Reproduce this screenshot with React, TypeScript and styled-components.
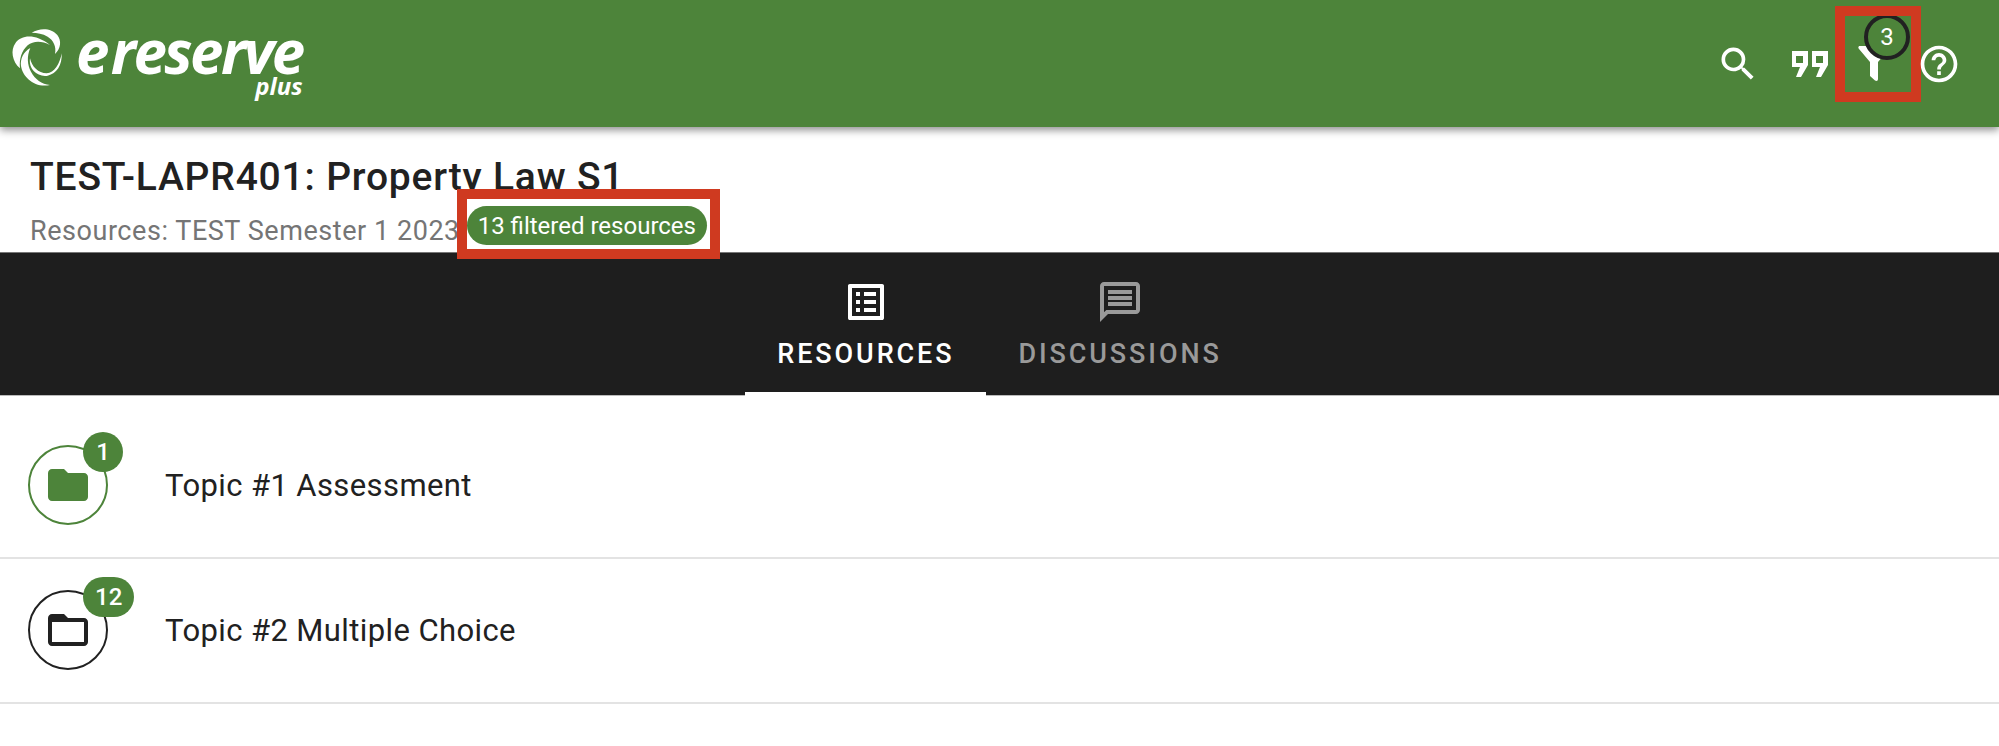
import React from "react";
import styled, { createGlobalStyle } from "styled-components";
import { MdSearch, MdHelpOutline, MdOutlineListAlt, MdOutlineMessage, MdFolder, MdFolderOpen } from "react-icons/md";

const GREEN = "#4d843a";
const RED = "#cf3a20";
const INK = "#212121";

const Global = createGlobalStyle`
  html, body { margin: 0; padding: 0; background: #fff; overflow: hidden; }
  body { font-family: Roboto, "Liberation Sans", sans-serif; color: ${INK}; }
`;

const Page = styled.div`
  width: 1999px;
  height: 746px;
  overflow: hidden;
  display: flex;
  flex-direction: column;
`;

const Header = styled.header`
  height: 127px;
  flex: none;
  background: ${GREEN};
  box-shadow: 0 3px 8px rgba(0, 0, 0, 0.45);
  display: flex;
  align-items: flex-start;
  justify-content: space-between;
  padding: 0 38px 0 5px;
  box-sizing: border-box;
  position: relative;
  z-index: 2;
`;

const Logo = styled.div`
  display: flex;
  align-items: flex-start;
  gap: 1px;
  padding-top: 20px;
  color: #fff;
`;

const LogoWords = styled.div`
  display: flex;
  flex-direction: column;
  align-items: flex-end;
  font-family: "Open Sans", sans-serif;
  font-style: italic;
  color: #fff;
  padding-top: 6px;
`;

const LogoName = styled.span`
  font-size: 60px;
  line-height: 50px;
  font-weight: 700;
  letter-spacing: -2.6px;
`;

const LogoE = styled.span`
  margin-right: 4px;
`;

const LogoPlus = styled.span`
  font-size: 24px;
  line-height: 20px;
  font-weight: 700;
`;

const Actions = styled.div`
  display: flex;
  align-items: center;
  height: 127px;
  color: #fff;
  position: relative;
`;

const ActionIcon = styled.span<{ $w: number; $ml?: number }>`
  width: ${(p) => p.$w}px;
  margin-left: ${(p) => p.$ml ?? 0}px;
  display: flex;
  justify-content: center;
  align-items: center;
  position: relative;
`;

const FilterBadge = styled.span`
  position: absolute;
  left: 6px;
  top: -32px;
  width: 46px;
  height: 46px;
  box-sizing: border-box;
  border: 4px solid ${INK};
  border-radius: 50%;
  background: ${GREEN};
  color: #fff;
  font-size: 24px;
  display: flex;
  align-items: center;
  justify-content: center;
`;

const Highlight = styled.span`
  position: absolute;
  box-sizing: border-box;
  border: 10px solid ${RED};
  pointer-events: none;
`;

const TopHighlight = styled(Highlight)`
  left: -23px;
  top: -40px;
  width: 86px;
  height: 96px;
`;

const CourseInfo = styled.section`
  height: 125px;
  flex: none;
  box-sizing: border-box;
  padding: 26px 30px 0;
`;

const Title = styled.h1`
  margin: 0;
  font-size: 39px;
  line-height: 48px;
  font-weight: 500;
  letter-spacing: 0.8px;
  color: ${INK};
`;

const SubRow = styled.div`
  display: flex;
  align-items: flex-start;
  margin-top: 5px;
`;

const Sub = styled.span`
  font-size: 27px;
  line-height: 40px;
  color: #757575;
  letter-spacing: 0.55px;
  margin-top: 5px;
`;

const ChipWrap = styled.span`
  position: relative;
  margin-left: 7px;
  display: inline-flex;
`;

const Chip = styled.span`
  height: 39px;
  width: 240px;
  box-sizing: border-box;
  border-radius: 20px;
  background: ${GREEN};
  color: #fff;
  font-size: 24px;
  display: flex;
  align-items: center;
  justify-content: center;
  position: relative;
  z-index: 1;
`;

const ChipHighlight = styled(Highlight)`
  left: -10px;
  top: -17px;
  width: 263px;
  height: 70px;
  background: #fff;
`;

const TabBar = styled.nav`
  height: 144px;
  flex: none;
  background: #1e1e1e;
  border-top: 1px solid #777;
  border-bottom: 1px solid #bbb;
  box-sizing: border-box;
  display: flex;
  justify-content: center;
`;

const Tab = styled.div<{ $active?: boolean }>`
  padding: 25px 32px 0;
  box-sizing: border-box;
  display: flex;
  flex-direction: column;
  align-items: center;
  color: ${(p) => (p.$active ? "#fff" : "#9a9a9a")};
  border-bottom: 4px solid ${(p) => (p.$active ? "#fff" : "transparent")};
  margin-bottom: -1px;
`;

const TabIcon = styled.span`
  display: flex;
  height: 48px;
`;

const TabLabel = styled.span`
  font-size: 27px;
  line-height: 30px;
  font-weight: 500;
  letter-spacing: 2.9px;
  margin-top: 13px;
`;

const List = styled.div`
  padding-top: 18px;
`;

const Row = styled.div`
  height: 145px;
  box-sizing: border-box;
  border-bottom: 2px solid #e3e3e3;
  display: flex;
  align-items: center;
  padding-left: 28px;
`;

const Avatar = styled.div<{ $color: string }>`
  width: 80px;
  height: 80px;
  box-sizing: border-box;
  border: 2px solid ${(p) => p.$color};
  border-radius: 50%;
  color: ${(p) => p.$color};
  display: flex;
  align-items: center;
  justify-content: center;
  position: relative;
  flex: none;
  margin-top: -1px;
`;

const CountBadge = styled.span`
  position: absolute;
  left: 53px;
  top: -15px;
  min-width: 40px;
  height: 40px;
  box-sizing: border-box;
  padding: 0 12px;
  border-radius: 20px;
  background: ${GREEN};
  color: #fff;
  font-size: 24px;
  font-weight: 500;
  display: flex;
  align-items: center;
  justify-content: center;
`;

const RowText = styled.span`
  margin-left: 57px;
  font-size: 31px;
  color: ${INK};
  letter-spacing: 0.4px;
`;

const Swirl = () => (
  <svg width="70" height="75" viewBox="0 0 210 225" fill="currentColor">
    <path d="M80 38C105 22 140 24 157 45C170 62 168 85 150 102C155 80 145 60 128 50C113 41 97 38 80 38Z" />
    <path d="M45 145C22 125 15 90 32 68C50 45 90 40 135 75C110 62 85 62 68 76C50 92 42 118 45 145Z" />
    <path d="M76 84C55 95 45 118 48 138C53 172 90 205 135 195C110 192 90 178 78 155C67 135 65 108 76 84Z" />
    <path d="M75 115C80 140 100 160 125 160C148 160 165 130 170 100C172 135 155 162 128 167C100 172 70 150 75 115Z" />
  </svg>
);

const Funnel = () => (
  <svg width="32" height="35" viewBox="0 0 32 35" fill="currentColor">
    <path d="M2 0H30C32 0 32 2 31 3L20 16V33C20 35 18.500 35.500 17 34.500L12 30V16L1 3C0 2 0 0 2 0Z" />
  </svg>
);

const Quotes = () => (
  <svg width="38" height="26" viewBox="0 0 38 26" fill="currentColor">
    <path
      fillRule="evenodd"
      d="M1 0H17V14L10 26H5L9 16H1ZM5 5V12H12V5ZM21 0H37V14L30 26H25L29 16H21ZM25 5V12H32V5Z"
    />
  </svg>
);

export default function App() {
  return (
    <Page>
      <Global />
      <Header>
        <Logo>
          <Swirl />
          <LogoWords>
            <LogoName><LogoE>e</LogoE>reserve</LogoName>
            <LogoPlus>plus</LogoPlus>
          </LogoWords>
        </Logo>
        <Actions>
          <ActionIcon $w={44}><MdSearch size={48} /></ActionIcon>
          <ActionIcon $w={38} $ml={31}><Quotes /></ActionIcon>
          <ActionIcon $w={32} $ml={29}>
            <Funnel />
            <FilterBadge>3</FilterBadge>
            <TopHighlight />
          </ActionIcon>
          <ActionIcon $w={44} $ml={27}><MdHelpOutline size={44} /></ActionIcon>
        </Actions>
      </Header>
      <CourseInfo>
        <Title>TEST-LAPR401: Property Law S1</Title>
        <SubRow>
          <Sub>Resources: TEST Semester 1 2023</Sub>
          <ChipWrap>
            <ChipHighlight />
            <Chip>13 filtered resources</Chip>
          </ChipWrap>
        </SubRow>
      </CourseInfo>
      <TabBar>
        <Tab $active>
          <TabIcon><MdOutlineListAlt size={48} /></TabIcon>
          <TabLabel>RESOURCES</TabLabel>
        </Tab>
        <Tab>
          <TabIcon><MdOutlineMessage size={48} /></TabIcon>
          <TabLabel>DISCUSSIONS</TabLabel>
        </Tab>
      </TabBar>
      <List>
        <Row>
          <Avatar $color={GREEN}>
            <MdFolder size={48} />
            <CountBadge>1</CountBadge>
          </Avatar>
          <RowText>Topic #1 Assessment</RowText>
        </Row>
        <Row>
          <Avatar $color={INK}>
            <MdFolderOpen size={48} />
            <CountBadge>12</CountBadge>
          </Avatar>
          <RowText>Topic #2 Multiple Choice</RowText>
        </Row>
      </List>
    </Page>
  );
}
